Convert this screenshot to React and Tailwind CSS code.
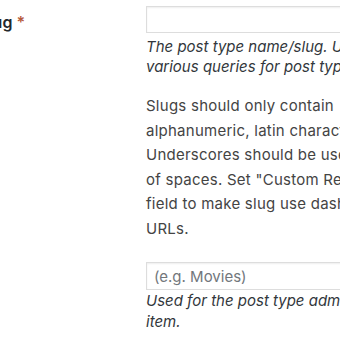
export default function App() {
  return (
    <div className="relative w-[340px] h-[340px] overflow-hidden bg-white font-['Inter','Liberation_Sans',sans-serif] text-[15px]">
      {/* Slug row */}
      <div className="flex">
        <div className="w-[168px] shrink-0 -ml-[22px] pt-[12px]">
          <span className="font-semibold text-[#23282d] text-[16px] leading-[20px]">
            Slug <span className="text-[#b55a3c]">*</span>
          </span>
        </div>
        <div className="pt-[6px] w-[420px] shrink-0">
          <input
            type="text"
            className="block w-full h-[27px] border border-[#dddddd] bg-white shadow-[inset_0_1px_2px_rgba(0,0,0,0.07)] outline-none"
          />
          <p className="mt-[4px] italic text-[#32373c] leading-[20px] whitespace-nowrap">
            The post type name/slug. Used for
            <br />
            various queries for post type data.
          </p>
          <p className="mt-[17px] text-[#444444] leading-[24.5px] tracking-[0.25px] whitespace-nowrap">
            Slugs should only contain
            <br />
            alphanumeric, latin characters.
            <br />
            Underscores should be used in place
            <br />
            of spaces. Set "Custom Rewrite Slug"
            <br />
            field to make slug use dashes for
            <br />
            URLs.
          </p>
        </div>
      </div>

      {/* Plural label row */}
      <div className="flex mt-[21px]">
        <div className="w-[146px] shrink-0" />
        <div className="w-[420px] shrink-0">
          <input
            type="text"
            placeholder="(e.g. Movies)"
            className="block w-full h-[28px] px-[7px] border border-[#dddddd] bg-white text-[15px] placeholder:text-[#72777c] shadow-[inset_0_1px_2px_rgba(0,0,0,0.07)] outline-none"
          />
          <p className="mt-0 italic text-[#32373c] leading-[21px] whitespace-nowrap">
            Used for the post type admin menu
            <br />
            item.
          </p>
        </div>
      </div>
    </div>
  );
}
